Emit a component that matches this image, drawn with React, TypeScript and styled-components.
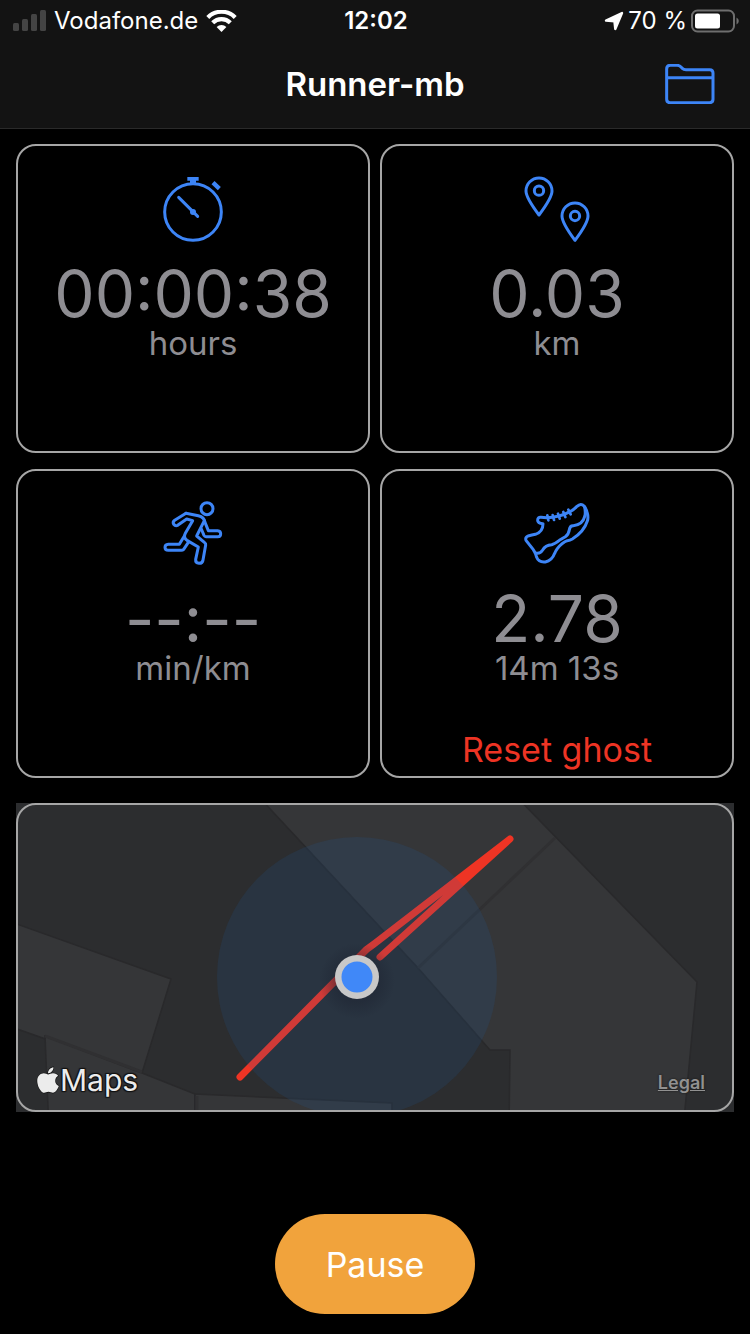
import React from "react";
import styled, { createGlobalStyle } from "styled-components";
import { FaApple } from "react-icons/fa";

const BLUE = "#3d85f7";
const GREY = "#8e8d92";
const LINE = "#a6a6a6";
const RED = "#ee3424";

const GlobalStyle = createGlobalStyle`
  * { box-sizing: border-box; }
  body {
    margin: 0;
    background: #000;
    color: #fff;
    font-family: Inter, "Liberation Sans", sans-serif;
  }
  button { font-family: inherit; border: 0; background: none; padding: 0; cursor: pointer; }
  svg { display: block; }
`;

const Screen = styled.div`
  min-height: 100vh;
  display: flex;
  flex-direction: column;
`;

const Header = styled.header`
  background: #131313;
  border-bottom: 1px solid #2a2a2a;
`;

const StatusBar = styled.div`
  display: grid;
  grid-template-columns: 1fr auto 1fr;
  align-items: center;
  height: 40px;
  padding: 0 11px 0 13px;
  font-size: 24px;
  line-height: 42px;
`;

const StatusGroup = styled.div<{ $end?: boolean }>`
  display: flex;
  align-items: center;
  justify-content: ${(p) => (p.$end ? "flex-end" : "flex-start")};
  gap: ${(p) => (p.$end ? "4px" : "8px")};
  white-space: nowrap;
`;

const Clock = styled.time`
  font-weight: 600;
`;

const NavBar = styled.div`
  display: grid;
  grid-template-columns: 1fr auto 1fr;
  align-items: center;
  height: 88px;
  padding: 0 35px;
`;

const Title = styled.h1`
  grid-column: 2;
  margin: 0;
  font-size: 33px;
  font-weight: 600;
  line-height: 40px;
`;

const FolderButton = styled.button`
  justify-self: end;
  color: ${BLUE};
`;

const Main = styled.main`
  padding: 15px 16px 0;
  display: flex;
  flex-direction: column;
  gap: 25px;
`;

const Cards = styled.div`
  display: grid;
  grid-template-columns: 1fr 1fr;
  gap: 16px 10px;
`;

const Card = styled.section`
  display: flex;
  flex-direction: column;
  align-items: center;
  min-height: 309px;
  padding: 31px 8px 6px;
  border: 2px solid ${LINE};
  border-radius: 20px;
  color: ${GREY};
`;

const CardIcon = styled.svg`
  width: 64px;
  height: 64px;
  overflow: visible;
  fill: none;
  stroke: ${BLUE};
  stroke-width: 9;
  stroke-linejoin: round;
  stroke-linecap: round;
`;

const Value = styled.div`
  margin-top: 21px;
  font-size: 64px;
  line-height: 64px;
`;

const Unit = styled.div`
  font-size: 33px;
  line-height: 34px;
`;

const ResetButton = styled.button`
  margin-top: auto;
  color: ${RED};
  font-size: 34px;
  line-height: 40px;
`;

const MapPanel = styled.section`
  position: relative;
  height: 309px;
  background: #2c2d2f;

  &::after {
    content: "";
    position: absolute;
    inset: 0;
    border: 2px solid ${LINE};
    border-radius: 20px;
    pointer-events: none;
  }
`;

const MapDrawing = styled.svg`
  width: 100%;
  height: 100%;
`;

const MapBrand = styled.div`
  position: absolute;
  left: 21px;
  bottom: 14px;
  display: flex;
  align-items: center;
  gap: 1px;
  color: #ececec;
  font-size: 30px;
  line-height: 36px;
  text-shadow: 1px 1px 1px #111, -1px -1px 1px #111, 1px -1px 1px #111, -1px 1px 1px #111;

  svg {
    width: 22px;
    height: 30px;
    stroke: #111;
    stroke-width: 20;
    paint-order: stroke;
    overflow: visible;
  }
`;

const LegalLink = styled.a`
  position: absolute;
  right: 29px;
  bottom: 17px;
  color: #919191;
  font-size: 18px;
  font-weight: 600;
  line-height: 24px;
  text-shadow: 0 0 2px #111;
`;

const Footer = styled.footer`
  display: flex;
  justify-content: center;
  margin-top: auto;
  padding: 24px 16px 20px;
`;

const PauseButton = styled.button`
  min-width: 200px;
  height: 100px;
  padding: 2px 50px 0;
  border-radius: 50px;
  background: #f1a33c;
  color: #fff;
  font-size: 34px;
  line-height: 40px;
`;

const SignalIcon = () => (
  <svg width="33" height="22" viewBox="0 0 33 22" fill="#444" aria-hidden="true">
    <rect x="0" y="13" width="6" height="8" rx="1.5" />
    <rect x="9" y="9" width="6" height="12" rx="1.5" />
    <rect x="18" y="4" width="6" height="17" rx="1.5" />
    <rect x="27" y="0" width="6" height="21" rx="1.5" />
  </svg>
);

const WifiIcon = () => (
  <svg width="31" height="22" viewBox="0 0 31 22" aria-hidden="true">
    <g fill="none" stroke="#fff" strokeWidth="4.2">
      <path d="M1.8 7.4 A19.4 19.4 0 0 1 29.2 7.4" />
      <path d="M6.7 12.8 A12.4 12.4 0 0 1 24.3 12.8" />
    </g>
    <path d="M10.6 17 A7 7 0 0 1 20.4 17 L15.5 22 Z" fill="#fff" />
  </svg>
);

const LocationIcon = () => (
  <svg width="20" height="20" viewBox="0 0 20 20" aria-hidden="true">
    <path d="M2 9.600 L18 2 L11.3 18 L10.4 10.2 Z" fill="#fff" stroke="#fff" strokeWidth="2.4" strokeLinejoin="round" />
  </svg>
);

const BatteryIcon = () => (
  <svg width="48" height="24" viewBox="0 0 48 24" aria-hidden="true">
    <rect x="1" y="1.5" width="42" height="21" rx="5.5" fill="none" stroke="#6e6e6e" strokeWidth="2" />
    <rect x="4" y="4.5" width="25" height="15" rx="2.5" fill="#fff" />
    <path d="M45.5 8.5 Q47.8 9.5 47.8 12 Q47.8 14.500 45.500 15.500 Z" fill="#6e6e6e" />
  </svg>
);

const FolderIcon = () => (
  <svg width="50" height="40" viewBox="869 192 150 120" fill="none" stroke="currentColor" strokeWidth="9" aria-hidden="true">
    <path d="M874 298 V207 Q874 196 885 196 H905 Q912 196 917 201 L921 205 Q925 209 932 209 H1003 Q1013 209 1013 219 V298 Q1013 308 1003 308 H884 Q874 308 874 298 Z" />
    <path d="M874 233 H1013" />
  </svg>
);

const StopwatchIcon = () => (
  <CardIcon viewBox="63 51 192 192" aria-hidden="true">
    <circle cx="159" cy="156" r="85" />
    <path d="M142 51 H176 V62 H168 V70 H150 V62 H142 Z" fill={BLUE} stroke="none" />
    <path d="M219 68 L238 86" strokeWidth="13" strokeLinecap="butt" />
    <path d="M116 112 L173 169" />
    <circle cx="159" cy="156" r="9" fill={BLUE} stroke="none" />
  </CardIcon>
);

const PinsIcon = () => (
  <CardIcon viewBox="45 51 192 192" aria-hidden="true">
    <path d="M87 165 Q48 113 48 93 A39 39 0 0 1 126 93 Q126 113 87 165 Z" />
    <circle cx="87" cy="92" r="14" />
    <path d="M195 241 Q156 189 156 168 A39 39 0 0 1 234 168 Q234 189 195 241 Z" />
    <circle cx="195" cy="168" r="14" />
  </CardIcon>
);

const RunnerIcon = () => (
  <CardIcon viewBox="33 36 192 192" aria-hidden="true">
    <circle cx="171" cy="56" r="18" />
    <path d="M108 70 L145 77 Q163 81 165 97 L175 122 H203 Q212 123 212 131 Q212 140 203 140 H168 Q164 140 162 136 L154 117" />
    <path d="M108 70 L74 91 Q67 96 71 103 Q76 109 83 106 L110 87 L128 92 L106 130 Q99 143 111 151 L145 171 L137 208 Q136 219 147 220 Q158 220 159 210 L167 165 Q168 161 164 158 L140 138 L163 92" />
    <path d="M103 138 L88 163 H55 Q45 164 45 172 Q45 181 55 181 H94 Q98 181 101 178 L115 157" />
  </CardIcon>
);

const ShoeIcon = () => (
  <CardIcon viewBox="45 36 192 192" aria-hidden="true">
    <path d="M48 151 Q45 142 54 138 Q66 135 76 133 Q99 125 99 101 Q83 101 83 91 Q83 81 93 82 Q140 87 180 65 Q192 59 201 49 Q213 38 222 48 Q228 55 231 66 Q236 82 232 93 Q222 125 187 147 Q180 151 172 152 Q157 157 142 176 Q137 183 134 190 Q126 212 106 216 Q86 218 80 202 Q76 186 70 179 Z" />
    <path d="M76 189 Q90 193 98 180 Q106 165 125 164 Q134 162 148 151 L166 140 Q176 133 178 119 Q180 106 190 107 Q218 105 225 77 Q227 66 224 51" />
    <path d="M112 76 L115 91 M128 75 L132 90 M144 71 L149 86 M160 66 L166 81 M175 59 L182 73" strokeWidth="8" />
  </CardIcon>
);

const MapView = () => (
  <MapDrawing viewBox="16 803 718 309" preserveAspectRatio="xMidYMid slice" role="img" aria-label="Map of the route">
    <defs>
      <radialGradient id="dotShadow">
        <stop offset="55%" stopColor="#1c2230" stopOpacity="0.45" />
        <stop offset="100%" stopColor="#1c2230" stopOpacity="0" />
      </radialGradient>
    </defs>
    <g fill="#353638" stroke="#29292b" strokeWidth="1.5">
      <path d="M0 918 L171 979 L142 1073 L0 1023 Z" />
      <path d="M45 1036 L142 1073 L195 1094 V1130 H49 Z" />
      <path d="M195 1094 L392 1103 V1130 H195 Z" />
      <path d="M246 783 H503 L697 982 L683 1130 H509 L510 1050 H490 L418 968 Z" />
    </g>
    <path d="M45 1036 L142 1072 M197 1096 V1112 M555 838 L418 968" stroke="#303032" strokeWidth="3" fill="none" />
    <path
      d="M240 1077 L360 956 Q366 949 374 944 L510 839 L380 957"
      fill="none"
      stroke={RED}
      strokeWidth="7"
      strokeLinecap="round"
      strokeLinejoin="round"
    />
    <circle cx="357" cy="977" r="140" fill="rgb(29,100,175)" fillOpacity="0.14" />
    <circle cx="357" cy="981" r="38" fill="url(#dotShadow)" />
    <circle cx="357" cy="977" r="22" fill="#c8c8c8" />
    <circle cx="357" cy="977" r="15.500" fill="#4088f8" />
  </MapDrawing>
);

type MetricProps = { icon: React.ReactNode; value: string; unit: string; children?: React.ReactNode };

const Metric = ({ icon, value, unit, children }: MetricProps) => (
  <Card>
    {icon}
    <Value>{value}</Value>
    <Unit>{unit}</Unit>
    {children}
  </Card>
);

export default function App() {
  return (
    <>
      <GlobalStyle />
      <Screen>
        <Header>
          <StatusBar>
            <StatusGroup>
              <SignalIcon />
              <span>Vodafone.de</span>
              <WifiIcon />
            </StatusGroup>
            <Clock>12:02</Clock>
            <StatusGroup $end>
              <LocationIcon />
              <span>70 %</span>
              <BatteryIcon />
            </StatusGroup>
          </StatusBar>
          <NavBar>
            <Title>Runner-mb</Title>
            <FolderButton type="button" aria-label="Saved runs">
              <FolderIcon />
            </FolderButton>
          </NavBar>
        </Header>
        <Main>
          <Cards>
            <Metric icon={<StopwatchIcon />} value="00:00:38" unit="hours" />
            <Metric icon={<PinsIcon />} value="0.03" unit="km" />
            <Metric icon={<RunnerIcon />} value="--:--" unit="min/km" />
            <Metric icon={<ShoeIcon />} value="2.78" unit="14m 13s">
              <ResetButton type="button">Reset ghost</ResetButton>
            </Metric>
          </Cards>
          <MapPanel>
            <MapView />
            <MapBrand>
              <FaApple aria-hidden="true" />
              <span>Maps</span>
            </MapBrand>
            <LegalLink href="#legal">Legal</LegalLink>
          </MapPanel>
        </Main>
        <Footer>
          <PauseButton type="button">Pause</PauseButton>
        </Footer>
      </Screen>
    </>
  );
}
